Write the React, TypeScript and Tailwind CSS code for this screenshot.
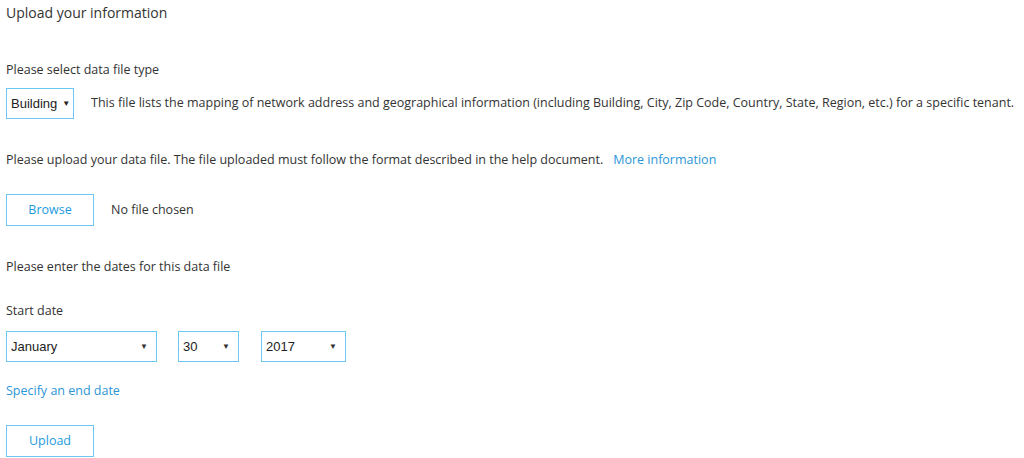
import React from "react";

const font = { fontFamily: '"Open Sans", "Liberation Sans", sans-serif' };

function Select({ value, className }: { value: string; className: string }) {
  return (
    <div
      className={`${className} h-[31px] border border-[#6cc8f3] flex items-center justify-between pl-[4px] pr-[8px] text-[13px] text-[#222] font-['Liberation_Sans',Arial,sans-serif]`}
    >
      <span>{value}</span>
      <span className="text-[8px] text-[#333]">▼</span>
    </div>
  );
}

export default function App() {
  return (
    <div className="w-[1024px] h-[458px] bg-white text-[#333] overflow-hidden px-[6px]" style={font}>
      {/* Header */}
      <h1 className="text-[14px] leading-[20px] pt-[3px] text-[#333]">Upload your information</h1>

      {/* File type */}
      <p className="text-[12.5px] leading-[18px] mt-[38px]">Please select data file type</p>
      <div className="flex items-center mt-[9px]">
        <div className="h-[31px] w-[68px] border border-[#6cc8f3] flex items-center pl-[4px] text-[13px] text-[#222] font-['Liberation_Sans',Arial,sans-serif]">
          <span>Building</span>
          <span className="text-[8px] ml-[5px]">▼</span>
        </div>
        <p className="ml-[17px] text-[12.5px] whitespace-nowrap">
          This file lists the mapping of network address and geographical information (including Building, City, Zip Code, Country, State, Region, etc.) for a specific tenant.
        </p>
      </div>

      {/* Upload */}
      <p className="text-[12.5px] leading-[18px] mt-[32px] whitespace-nowrap">
        Please upload your data file. The file uploaded must follow the format described in the help document.
        <a className="ml-[10px] text-[#2d96d6]">More information</a>
      </p>
      <div className="flex items-center mt-[25px]">
        <button className="w-[88px] h-[32px] border border-[#6cc8f3] text-[#1e9be0] text-[12.5px]">Browse</button>
        <span className="ml-[17px] text-[12.5px]">No file chosen</span>
      </div>

      {/* Dates */}
      <p className="text-[12.5px] leading-[18px] mt-[32px]">Please enter the dates for this data file</p>
      <p className="text-[12.5px] leading-[18px] mt-[26px]">Start date</p>
      <div className="flex items-center mt-[11px]">
        <Select value="January" className="w-[151px]" />
        <Select value="30" className="w-[61px] ml-[21px]" />
        <Select value="2017" className="w-[85px] ml-[22px]" />
      </div>

      <a className="block text-[12.5px] leading-[18px] mt-[20px] text-[#2d96d6]">Specify an end date</a>
      <button className="mt-[25px] w-[88px] h-[32px] border border-[#6cc8f3] text-[#1e9be0] text-[12.5px]">Upload</button>
    </div>
  );
}
